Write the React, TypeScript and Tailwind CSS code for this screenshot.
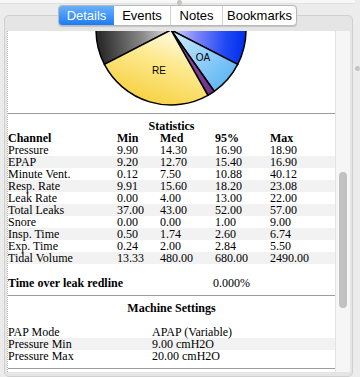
import React from "react";

const rows: [string, string, string, string, string][] = [
  ["Pressure", "9.90", "14.30", "16.90", "18.90"],
  ["EPAP", "9.20", "12.70", "15.40", "16.90"],
  ["Minute Vent.", "0.12", "7.50", "10.88", "40.12"],
  ["Resp. Rate", "9.91", "15.60", "18.20", "23.08"],
  ["Leak Rate", "0.00", "4.00", "13.00", "22.00"],
  ["Total Leaks", "37.00", "43.00", "52.00", "57.00"],
  ["Snore", "0.00", "0.00", "1.00", "9.00"],
  ["Insp. Time", "0.50", "1.74", "2.60", "6.74"],
  ["Exp. Time", "0.24", "2.00", "2.84", "5.50"],
  ["Tidal Volume", "13.33", "480.00", "680.00", "2490.00"],
];

const settings: [string, string][] = [
  ["PAP Mode", "APAP (Variable)"],
  ["Pressure Min", "9.00 cmH2O"],
  ["Pressure Max", "20.00 cmH2O"],
];

function Pie() {
  const c = "163,-1";
  return (
    <svg width="327" height="82" viewBox="0 0 327 82" className="block">
      <defs>
        <linearGradient id="gGray" x1="0" y1="0.5" x2="1" y2="0.3">
          <stop offset="0" stopColor="#2c2c2c" />
          <stop offset="0.55" stopColor="#8a8a8a" />
          <stop offset="1" stopColor="#f2f2f2" />
        </linearGradient>
        <linearGradient id="gYellow" x1="0.75" y1="0" x2="0.3" y2="0.9">
          <stop offset="0" stopColor="#fffdf0" />
          <stop offset="0.45" stopColor="#fde98e" />
          <stop offset="1" stopColor="#f7d246" />
        </linearGradient>
        <linearGradient id="gBlue" x1="0" y1="0.5" x2="1" y2="0.6">
          <stop offset="0" stopColor="#dcdcff" />
          <stop offset="0.35" stopColor="#8088fa" />
          <stop offset="0.75" stopColor="#2048f2" />
          <stop offset="1" stopColor="#0030ee" />
        </linearGradient>
        <linearGradient id="gLight" x1="0" y1="0" x2="1" y2="1">
          <stop offset="0" stopColor="#d2edff" />
          <stop offset="1" stopColor="#4cadf2" />
        </linearGradient>
        <linearGradient id="gPurple" x1="0" y1="0" x2="1" y2="1">
          <stop offset="0" stopColor="#9a5ab4" />
          <stop offset="1" stopColor="#6c2c88" />
        </linearGradient>
      </defs>
      <g stroke="#000" strokeWidth="1.5" strokeLinejoin="round">
        <path d={`M${c} L96.4,33.4 A75,75 0 0 1 163,-76 Z`} fill="url(#gGray)" />
        <path d={`M${c} L163,-76 A75,75 0 0 1 229.7,33.3 Z`} fill="url(#gBlue)" />
        <path d={`M${c} L229.7,33.3 A75,75 0 0 1 206.2,60.3 Z`} fill="url(#gLight)" />
        <path d={`M${c} L206.2,60.3 A75,75 0 0 1 199.9,64.3 Z`} fill="url(#gPurple)" />
        <path d={`M${c} L199.9,64.3 A75,75 0 0 1 96.4,33.4 Z`} fill="url(#gYellow)" />
      </g>
      <text x="151" y="42.5" textAnchor="middle" fontSize="10" fontFamily="'Liberation Sans', Arial, sans-serif" fill="#000">
        RE
      </text>
      <text x="195" y="29.5" textAnchor="middle" fontSize="10" fontFamily="'Liberation Sans', Arial, sans-serif" fill="#000">
        OA
      </text>
    </svg>
  );
}

export default function App() {
  return (
    <div className="relative w-[360px] h-[377px] overflow-hidden bg-[#ececec]">
      <div className="h-[4px] w-[355px] bg-[#f7f7f7] border-b border-[#e2e2e2]" />

      <div className="ml-[4px] mt-[11px] w-[349px] h-[362px] border border-[#d0d0d0] rounded-[5px] bg-[#e5e5e5] pt-[15px] pl-[2px] flex">
        <div
          className="w-[328px] h-[341px] bg-white overflow-hidden border-l border-dotted border-[#b0b0b0] text-black text-[12px] leading-[12px]"
          style={{ fontFamily: "'Liberation Serif', 'Times New Roman', serif" }}
        >
          <Pie />
          <div className="h-px bg-[#9c9c9c]" />
          <div className="pt-[6px] h-[18px] text-center font-bold">Statistics</div>
          <div className="grid grid-cols-[109px_43px_55px_55px_1fr] h-[12px] font-bold">
            <div>Channel</div>
            <div>Min</div>
            <div>Med</div>
            <div>95%</div>
            <div>Max</div>
          </div>
          {rows.map((r, i) => (
            <div
              key={r[0]}
              className={`grid grid-cols-[109px_43px_55px_55px_1fr] h-[12px] ${i % 2 === 1 ? "bg-[#f2f2f2]" : ""}`}
            >
              {r.map((v, j) => (
                <div key={j} className="whitespace-nowrap">
                  {v}
                </div>
              ))}
            </div>
          ))}
          <div className="mt-[13px] h-[12px] flex">
            <div className="w-[205px] font-bold whitespace-nowrap">Time over leak redline</div>
            <div>0.000%</div>
          </div>
          <div className="mt-[6px] h-px bg-[#9c9c9c]" />
          <div className="pt-[6px] h-[18px] text-center font-bold">Machine Settings</div>
          <div className="mt-[12px]">
            {settings.map((s, i) => (
              <div key={s[0]} className={`flex h-[12px] ${i === 1 ? "bg-[#f2f2f2]" : ""}`}>
                <div className="w-[144px] whitespace-nowrap">{s[0]}</div>
                <div className="whitespace-nowrap">{s[1]}</div>
              </div>
            ))}
          </div>
          <div className="mt-[6px] h-px bg-[#9c9c9c]" />
        </div>
        <div className="w-[15px] h-[341px] bg-[#f6f6f6] border-l border-[#e3e3e3] pl-[3px] pt-[141px]">
          <div className="w-[8px] h-[136px] rounded-full bg-[#c1c1c1]" />
        </div>
      </div>

      {/* splitter handles */}
      <div className="absolute left-[177px] top-0 w-[5px] h-[5px] rounded-full bg-[#c4c4c4]" />
      <div className="absolute left-[355px] top-[66px] w-[5px] h-[5px] rounded-full bg-[#c4c4c4]" />
      <div className="absolute left-[358px] top-[68px] w-[2px] h-px bg-[#d0d0d0]" />

      {/* tabs */}
      <div
        className="absolute left-[58px] top-[5px] h-[21px] flex border border-[#b9b9b9] rounded-[4px] bg-white overflow-hidden shadow-[0_0.5px_1px_rgba(0,0,0,0.15)] text-[13px] leading-[19px]"
        style={{ fontFamily: "'Liberation Sans', Arial, sans-serif" }}
      >
        <div className="w-[55px] text-center text-white bg-gradient-to-b from-[#68b0fb] to-[#1a7bf4]">Details</div>
        <div className="w-[56px] text-center text-black">Events</div>
        <div className="w-[52px] text-center text-black border-l border-[#d4d4d4]">Notes</div>
        <div className="w-[74px] text-center text-black border-l border-[#d4d4d4]">Bookmarks</div>
      </div>
    </div>
  );
}
